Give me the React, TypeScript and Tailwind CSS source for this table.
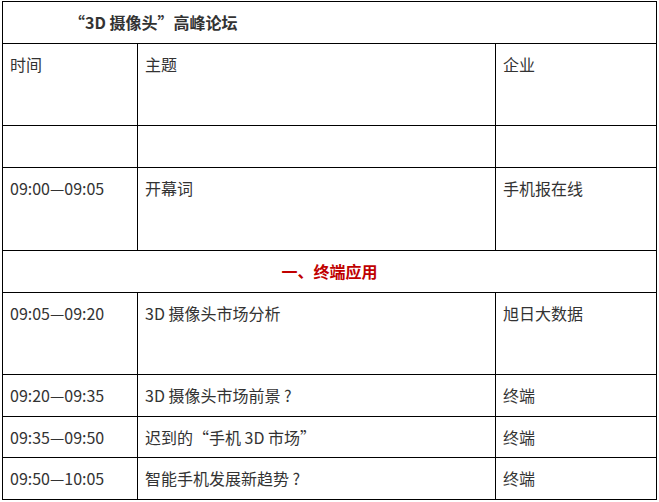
import React from "react";

type Row = {
  time: string;
  topic: string;
  company: string;
  h: string;
};

const font = { fontFamily: '"Noto Sans CJK SC", "Microsoft YaHei", sans-serif' };

function Cell({ children, w }: { children?: React.ReactNode; w: string }) {
  return (
    <div className={`${w} shrink-0 border-r border-black pl-[7px] pt-[8px] leading-6`}>
      {children}
    </div>
  );
}

function ScheduleRow({ time, topic, company, h }: Row) {
  return (
    <div className={`flex ${h} border-b border-black`}>
      <Cell w="w-[135px]">{time}</Cell>
      <Cell w="w-[358px]">{topic}</Cell>
      <Cell w="w-[161px]">{company}</Cell>
    </div>
  );
}

export default function App() {
  return (
    <div className="h-[502px] w-[659px] bg-white pl-[2px] pt-[1px] text-[16px] text-[#333]" style={font}>
      <div className="w-[655px] border-l border-t border-black">
        <div className="flex h-[42px] items-center border-b border-r border-black pb-[2px] pl-[66px] font-bold leading-6">
          “3D 摄像头”高峰论坛
        </div>
        <ScheduleRow time="时间" topic="主题" company="企业" h="h-[82px]" />
        <ScheduleRow time="" topic="" company="" h="h-[42px]" />
        <ScheduleRow time="09:00—09:05" topic="开幕词" company="手机报在线" h="h-[83px]" />
        <div className="flex h-[42px] items-center justify-center border-b border-r border-black pb-[2px] font-bold leading-6 text-[#c00000]">
          一、终端应用
        </div>
        <ScheduleRow time="09:05—09:20" topic="3D 摄像头市场分析" company="旭日大数据" h="h-[82px]" />
        <ScheduleRow time="09:20—09:35" topic="3D 摄像头市场前景 ?" company="终端" h="h-[42px]" />
        <ScheduleRow time="09:35—09:50" topic="迟到的“手机 3D 市场”" company="终端" h="h-[41px]" />
        <ScheduleRow time="09:50—10:05" topic="智能手机发展新趋势 ?" company="终端" h="h-[42px]" />
      </div>
    </div>
  );
}
